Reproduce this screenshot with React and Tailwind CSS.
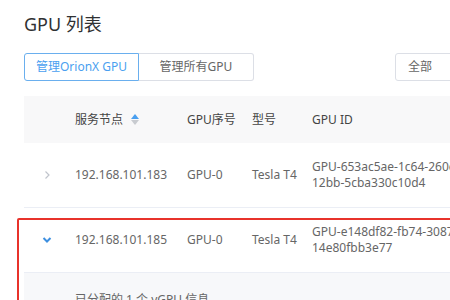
import React from 'react';

const font = { fontFamily: '"Noto Sans", "Noto Sans CJK SC", sans-serif' };

const rows = [
  { node: '192.168.101.183', idx: 'GPU-0', model: 'Tesla T4', id: ['GPU-653ac5ae-1c64-260e-', '12bb-5cba330c10d4'], open: false },
  { node: '192.168.101.185', idx: 'GPU-0', model: 'Tesla T4', id: ['GPU-e148df82-fb74-3087-', '14e80fbb3e77'], open: true },
];

const cols = 'grid grid-cols-[51px_112px_65px_60px_1fr] items-center';

const SortIcon = () => (
  <span className="ml-[8px] inline-flex flex-col gap-[1px]">
    <svg width="8" height="5" viewBox="0 0 8 5"><path d="M4 0L8 5H0z" fill="#4a9ff0" /></svg>
    <svg width="8" height="5" viewBox="0 0 8 5"><path d="M0 0H8L4 5z" fill="#c8cbd0" /></svg>
  </span>
);

const Chevron = ({ open }) =>
  open ? (
    <svg width="12" height="12" viewBox="0 0 12 12" className="ml-[17px]">
      <path d="M2.5 4l3.5 3.5L9.5 4" fill="none" stroke="#3d8fe0" strokeWidth="2" />
    </svg>
  ) : (
    <svg width="12" height="12" viewBox="0 0 12 12" className="ml-[17px]">
      <path d="M4.5 2.5L8 6l-3.5 3.5" fill="none" stroke="#c0c4cc" strokeWidth="1.2" />
    </svg>
  );

export default function App() {
  return (
    <div className="relative h-[300px] w-[450px] overflow-hidden bg-white" style={font}>
      <div className="w-[560px] pl-[24px] pt-[12px]">
        <h1 className="text-[18px] leading-[24px] text-[#303133]">GPU 列表</h1>

        <div className="mt-[17px] flex items-center">
          <div className="flex">
            <button className="h-[28px] w-[115px] rounded-l-[3px] border border-[#6aafee] text-[12px] text-[#4a9ff0]">
              管理OrionX GPU
            </button>
            <button className="h-[28px] w-[115px] rounded-r-[3px] border border-l-0 border-[#dcdfe6] text-[12px] text-[#666]">
              管理所有GPU
            </button>
          </div>
          <div className="ml-[141px] flex h-[28px] w-[120px] items-center rounded-[3px] border border-[#dcdfe6] pl-[12px] text-[12px] text-[#666]">
            全部
          </div>
        </div>

        <div className="mt-[15px] text-[12px]">
          <div className={`${cols} h-[47px] bg-[#f8f8f9] text-[#444]`}>
            <span />
            <span className="flex items-center">服务节点<SortIcon /></span>
            <span>GPU序号</span>
            <span>型号</span>
            <span>GPU ID</span>
          </div>

          {rows.map((r) => (
            <div key={r.node}>
              <div className={`${cols} h-[65px] border-b border-[#ebeef5] text-[#666]`}>
                <Chevron open={r.open} />
                <span>{r.node}</span>
                <span>{r.idx}</span>
                <span>{r.model}</span>
                <span className="leading-[16px]">
                  <div>{r.id[0]}</div>
                  <div>{r.id[1]}</div>
                </span>
              </div>
              {r.open && (
                <div className="h-[60px] bg-[#f7f8fa] pl-[51px] pt-[18px] text-[#666]">
                  已分配的 1 个 vGPU 信息
                </div>
              )}
            </div>
          ))}
        </div>
      </div>

      <div className="absolute left-[17px] top-[218px] h-[120px] w-[460px] rounded-[2px] border-2 border-[#e8322b]" />
    </div>
  );
}
